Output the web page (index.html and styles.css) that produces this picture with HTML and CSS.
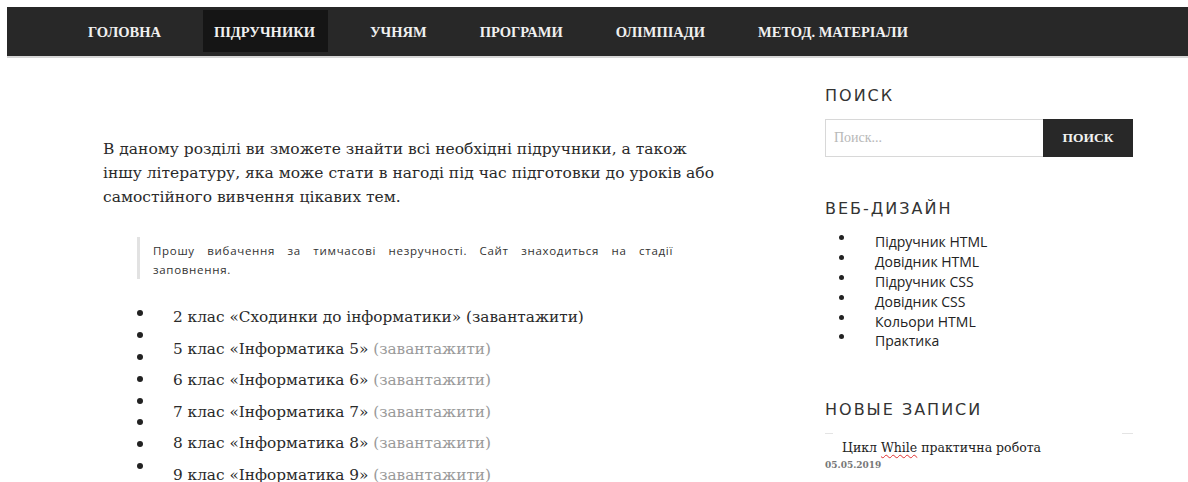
FILE: index.html
```html
<!DOCTYPE html>
<html lang="uk">
<head>
<meta charset="utf-8">
<title>Підручники</title>
<link rel="stylesheet" href="styles.css">
</head>
<body>
<nav class="topnav">
  <a class="nav-item" href="#">Головна</a>
  <a class="nav-item active" href="#">Підручники</a>
  <a class="nav-item" href="#">Учням</a>
  <a class="nav-item" href="#">Програми</a>
  <a class="nav-item" href="#">Олімпіади</a>
  <a class="nav-item" href="#">Метод. матеріали</a>
</nav>

<div class="page">
  <main class="content">
    <p class="intro">В даному розділі ви зможете знайти всі необхідні підручники, а також іншу літературу, яка може стати в нагоді під час підготовки до уроків або самостійного вивчення цікавих тем.</p>

    <blockquote class="notice">Прошу вибачення за тимчасові незручності. Сайт знаходиться на стадії заповнення.</blockquote>

    <div class="books">
      <ul class="bullets">
        <li></li><li></li><li></li><li></li><li></li><li></li><li></li><li></li>
      </ul>
      <ol class="book-list">
        <li>2 клас «Сходинки до інформатики» <a class="dl dark" href="#">(завантажити)</a></li>
        <li>5 клас «Інформатика 5» <a class="dl" href="#">(завантажити)</a></li>
        <li>6 клас «Інформатика 6» <a class="dl" href="#">(завантажити)</a></li>
        <li>7 клас «Інформатика 7» <a class="dl" href="#">(завантажити)</a></li>
        <li>8 клас «Інформатика 8» <a class="dl" href="#">(завантажити)</a></li>
        <li>9 клас «Інформатика 9» <a class="dl" href="#">(завантажити)</a></li>
      </ol>
    </div>
  </main>

  <aside class="sidebar">
    <section class="widget">
      <h3 class="widget-title">Поиск</h3>
      <form class="search">
        <input class="search-field" type="text" placeholder="Поиск...">
        <button class="search-btn" type="button">Поиск</button>
      </form>
    </section>

    <section class="widget">
      <h3 class="widget-title">Веб-дизайн</h3>
      <ul class="links">
        <li>Підручник HTML</li>
        <li>Довідник HTML</li>
        <li>Підручник CSS</li>
        <li>Довідник CSS</li>
        <li>Кольори HTML</li>
        <li>Практика</li>
      </ul>
    </section>

    <section class="widget">
      <h3 class="widget-title">Новые записи</h3>
      <div class="rule"><span class="rule-l"></span><span class="rule-r"></span></div>
      <div class="post">
        <a class="post-title" href="#">Цикл <span class="typo">While</span> практична робота</a>
        <div class="post-date">05.05.2019</div>
      </div>
    </section>
  </aside>
</div>
</body>
</html>
```

FILE: styles.css
```css
* { box-sizing: border-box; }

html, body {
  background: #fff;
}

body {
  margin: 7px 0 0 7px;
  font-family: "DejaVu Serif", serif;
  color: #333;
}

a { text-decoration: none; color: inherit; }

/* top navigation */
.topnav {
  display: flex;
  align-items: stretch;
  gap: 31px;
  height: 51px;
  padding: 3px 0 4px 70px;
  background: #282828;
  border-bottom: 2px solid #d6d6d6;
}

.nav-item {
  display: flex;
  align-items: center;
  padding: 3px 11px 0;
  font-family: "Liberation Serif", serif;
  font-weight: bold;
  font-size: 14.5px;
  text-transform: uppercase;
  color: #f0f0f0;
}

.nav-item.active {
  background: #151515;
  padding-right: 13px;
}

/* page columns */
.page {
  display: flex;
  padding: 0 0 0 96px;
}

.content {
  width: 622px;
  padding-top: 79px;
}

.intro {
  margin: 0;
  width: 625px;
  font-size: 15.5px;
  line-height: 24px;
  color: #2a2a2a;
}

.notice {
  margin: 28px 0 0 34px;
  padding: 4px 0 0 13px;
  width: 536px;
  height: 42px;
  border-left: 3px solid #e2e2e2;
  font-family: "Open Sans", sans-serif;
  font-size: 11.5px;
  letter-spacing: 0.7px;
  line-height: 19px;
  text-align: justify;
  color: #333;
}

.books {
  display: flex;
  margin-top: 23px;
}

.bullets {
  list-style: none;
  margin: 0;
  padding: 0 0 0 34px;
  width: 70px;
}

.bullets li {
  height: 21.9px;
  display: flex;
  align-items: center;
}

.bullets li::before {
  content: "";
  width: 6px;
  height: 6px;
  border-radius: 50%;
  background: #222;
}

.book-list {
  list-style: none;
  margin: 0;
  padding: 0;
}

.book-list li {
  font-size: 15.3px;
  line-height: 31.6px;
  color: #2a2a2a;
  white-space: nowrap;
}

.dl { color: #9a9a9a; }
.dl.dark { color: #2a2a2a; }

/* sidebar */
.sidebar {
  width: 308px;
  margin-left: 100px;
  padding-top: 28px;
}

.widget { margin-bottom: 42px; }

.widget-title {
  margin: 0 0 14px;
  font-family: "DejaVu Sans", sans-serif;
  font-weight: normal;
  font-size: 16px;
  letter-spacing: 2px;
  text-transform: uppercase;
  color: #333;
}

.search {
  display: flex;
  height: 38px;
}

.search-field {
  flex: 1;
  min-width: 0;
  border: 1px solid #d8d8d8;
  border-right: 0;
  padding: 0 8px;
  font-family: "Liberation Serif", serif;
  font-size: 14px;
  color: #333;
  outline: none;
}

.search-field::placeholder { color: #b8b8b8; }

.search-btn {
  width: 90px;
  border: 0;
  background: #282828;
  color: #f2f2f2;
  font-family: "Liberation Serif", serif;
  font-weight: bold;
  font-size: 13.5px;
  text-transform: uppercase;
}

.links {
  list-style: none;
  margin: 0;
  padding: 0 0 7px 14px;
}

.links li {
  display: flex;
  align-items: center;
  height: 19.8px;
  font-family: "Open Sans", sans-serif;
  font-size: 14px;
  color: #222;
}

.links li::before {
  content: "";
  width: 5px;
  height: 5px;
  border-radius: 50%;
  background: #222;
  margin-right: 31px;
  transform: translateY(-4px);
}

.rule {
  display: flex;
  justify-content: space-between;
  height: 1px;
}

.rule-l { width: 8px; background: #e4e4e4; }
.rule-r { width: 11px; background: #e4e4e4; }

.post { padding-top: 6px; }

.post-title {
  display: block;
  padding-left: 17px;
  font-size: 12.5px;
  color: #222;
}

.typo {
  text-decoration: underline wavy #e03030;
  text-decoration-thickness: 1px;
  text-underline-offset: 2px;
}

.post-date {
  margin-top: 5px;
  font-size: 9px;
  font-weight: bold;
  color: #777;
}
```
